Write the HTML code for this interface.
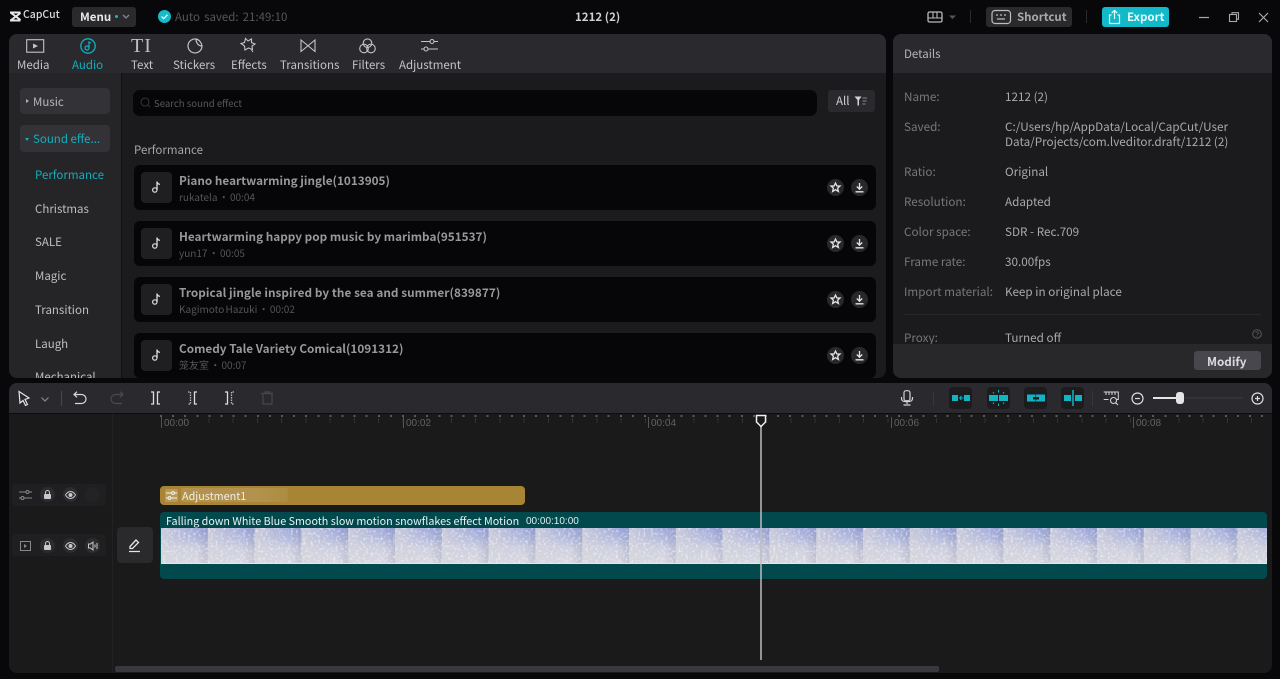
<!DOCTYPE html>
<html><head><meta charset="utf-8"><title>CapCut</title>
<style>
html,body{margin:0;padding:0;background:#08080a;width:1280px;height:679px;overflow:hidden}
body{position:relative;font-family:"Noto Sans CJK SC","Liberation Sans",sans-serif;color:#c8c8cc;font-size:12px}
.a{position:absolute;white-space:nowrap;line-height:1}
.b{position:absolute}
svg{position:absolute;overflow:visible;fill:none}
.tab{position:absolute;top:58px;font-size:11.5px;line-height:14px;color:#c4c4c8;white-space:nowrap}
.side{position:absolute;left:35px;font-size:11.5px;line-height:14px;color:#bfbfc3;white-space:nowrap}
.row{position:absolute;left:134px;width:742px;height:45px;background:#060608;border-radius:6px}
.thumb{position:absolute;left:7px;top:7px;width:31px;height:31px;background:#1f1f21;border-radius:4px}
.tt{position:absolute;left:45px;top:8px;font-size:11.75px;line-height:15px;font-weight:700;color:#98989c;white-space:nowrap}
.st{position:absolute;left:45px;top:25px;font-size:10px;line-height:14px;color:#55555a;white-space:nowrap;word-spacing:-1px}
.rb{position:absolute;top:14px;width:17px;height:17px;border-radius:50%;background:#28282b}
.lb{position:absolute;left:904px;font-size:11.7px;line-height:14px;color:#77777b;white-space:nowrap}
.val{position:absolute;left:1005px;font-size:11.7px;line-height:15px;color:#a9a9ad;white-space:nowrap}
.ci{position:absolute;width:15px;height:15px;border-radius:50%;background:#2c2c2f}
.sq{position:absolute;top:387px;width:23px;height:22px;border-radius:4px;background:#1c1c1f}
.tick{position:absolute;top:417px;width:1px;height:11px;background:#555}
.tl{position:absolute;top:418px;font:10px/11px "Liberation Sans",sans-serif;color:#626266}
</style></head><body>

<!-- top bar -->
<svg style="left:9px;top:11px" width="13" height="11" viewBox="0 0 13 11"><path d="M1 1.500h10.500M1 9.500h10.500M1.500 1.500 11.500 9M1.500 9.500 11.500 2" stroke="#e8e8e8" stroke-width="2"/></svg>
<div class="a" style="left:23px;top:10px;font-size:10.5px;color:#d8d8d8;font-weight:500">CapCut</div>
<div class="b" style="left:72px;top:7px;width:64px;height:20px;background:#2a2a2d;border-radius:3px"></div>
<div class="a" style="left:80px;top:12px;font-size:11.5px;font-weight:700;color:#e8e8ea">Menu</div>
<div class="b" style="left:115px;top:15px;width:3px;height:3px;border-radius:50%;background:#14b8c8"></div>
<svg style="left:122px;top:14px" width="9" height="6"><path d="M1 1l3 3 3-3" stroke="#88888c" stroke-width="1.3"/></svg>
<div class="b" style="left:158px;top:10px;width:13px;height:13px;border-radius:50%;background:#14bccb"></div>
<svg style="left:158px;top:10px" width="13" height="13"><path d="M3.500 6.500l2.200 2.200 3.800-4" stroke="#fff" stroke-width="1.2"/></svg>
<div class="a" style="left:175px;top:12px;font-size:11.5px;color:#55555a;word-spacing:1.500px">Auto saved: 21:49:10</div>
<div class="a" style="left:575px;top:12px;font-size:11.5px;font-weight:700;color:#d0d0d4">1212 (2)</div>

<svg style="left:927px;top:11px" width="30" height="12"><rect x="1" y="1" width="14" height="10" rx="1.500" stroke="#bbb" stroke-width="1.3"/><path d="M1 7h14M6 1v6M10 1v6" stroke="#bbb" stroke-width="1.1"/><path d="M22 4.500h7l-3.500 3.500z" fill="#55555a"/></svg>
<div class="b" style="left:970px;top:10px;width:1px;height:13px;background:#2a2a2d"></div>
<div class="b" style="left:986px;top:7px;width:86px;height:20px;background:#2a2a2d;border-radius:3px"></div>
<svg style="left:991px;top:9px" width="21" height="16"><rect x="1" y="1.500" width="18.500" height="13" rx="3" stroke="#bdbdc0" stroke-width="1.2"/><path d="M5 6h2M9 6h2M13 6h2M6 10h8" stroke="#bdbdc0" stroke-width="1.2"/></svg>
<div class="a" style="left:1017px;top:12px;font-size:11.5px;font-weight:700;color:#a8a8ac">Shortcut</div>
<div class="b" style="left:1086px;top:10px;width:1px;height:13px;background:#2a2a2d"></div>
<div class="b" style="left:1102px;top:7px;width:67px;height:20px;background:#12b9c8;border-radius:3px"></div>
<svg style="left:1108px;top:9px" width="14" height="16"><path d="M3.500 6H1.500v8.500h10V6H9.500M6.500 10V1.500M3.800 4 6.500 1.500 9.200 4" stroke="#e8fbfd" stroke-width="1.2"/></svg>
<div class="a" style="left:1127px;top:12px;font-size:11.5px;font-weight:700;color:#eafcfe">Export</div>
<svg style="left:1199px;top:12px" width="72" height="12"><path d="M0 5.500h10" stroke="#a8a8ac" stroke-width="1.2"/><rect x="30.500" y="2.500" width="7" height="7" stroke="#a8a8ac" stroke-width="1.1"/><path d="M33 2.500V.7h6.500v6.500H37.500" stroke="#a8a8ac" stroke-width="1.1"/><path d="M60 1l9 9M69 1l-9 9" stroke="#a8a8ac" stroke-width="1.2"/></svg>

<!-- left panel -->
<div class="b" style="left:9px;top:34px;width:877px;height:344px;background:#1b1b1d;border-radius:8px;overflow:hidden">
  <div class="b" style="left:0;top:0;width:877px;height:39px;background:#2a2a2e"></div>
  <div class="b" style="left:0;top:39px;width:112px;height:305px;background:#252528;border-right:1px solid #111"></div>
</div>
<!-- tab icons -->
<svg style="left:26px;top:39px" width="18" height="14"><rect x=".7" y=".7" width="17" height="12.500" stroke="#c4c4c8" stroke-width="1.1"/><path d="M7 4.500l5 2.500-5 2.500z" fill="#c4c4c8"/></svg>
<svg style="left:80px;top:38px" width="16" height="16"><circle cx="8" cy="8" r="7.200" stroke="#12b0c0" stroke-width="1.3"/><circle cx="7" cy="10" r="2" stroke="#12b0c0" stroke-width="1.2"/><path d="M9 10V4l2 1" stroke="#12b0c0" stroke-width="1.2"/></svg>
<div class="a" style="left:131px;top:38px;font:20px/16px 'Liberation Serif',serif;color:#c0c0c4;letter-spacing:1px">TI</div>
<svg style="left:187px;top:38px" width="16" height="16"><path d="M9 1A7 7 0 1 0 15 8C11.500 8 9 5 9 1zM9 1c3 .5 5.500 3.500 6 7" stroke="#c4c4c8" stroke-width="1.2"/></svg>
<svg style="left:240px;top:37px" width="16" height="16"><path d="M5.500 1.500 8 4l3.500-2v3.500L15 7l-3 2 .5 3.500-4-1.500L5 13l-.5-4L1 6.500l3.500-1z" stroke="#c4c4c8" stroke-width="1.1"/><path d="M11.500 13l1.500 2" stroke="#c4c4c8"/></svg>
<svg style="left:300px;top:39px" width="16" height="14"><path d="M1 1l14 11.500V1L1 12.500z" stroke="#c4c4c8" stroke-width="1.1"/></svg>
<svg style="left:359px;top:38px" width="17" height="16"><circle cx="8.500" cy="5.200" r="4.300" stroke="#c4c4c8" stroke-width="1.100"/><circle cx="5" cy="10.500" r="4.300" stroke="#c4c4c8" stroke-width="1.100"/><circle cx="12" cy="10.500" r="4.300" stroke="#c4c4c8" stroke-width="1.100"/></svg>
<svg style="left:421px;top:38px" width="17" height="15"><path d="M0 3.500h9M13 3.500h4M0 11h3M7 11h10" stroke="#c4c4c8" stroke-width="1.100"/><circle cx="11" cy="3.500" r="2" stroke="#c4c4c8" stroke-width="1.100"/><circle cx="5" cy="11" r="2" stroke="#c4c4c8" stroke-width="1.100"/></svg>
<div class="tab" style="left:17px">Media</div>
<div class="tab" style="left:72px;color:#12aebd">Audio</div>
<div class="tab" style="left:131px">Text</div>
<div class="tab" style="left:173px">Stickers</div>
<div class="tab" style="left:231px">Effects</div>
<div class="tab" style="left:280px">Transitions</div>
<div class="tab" style="left:352px">Filters</div>
<div class="tab" style="left:399px">Adjustment</div>

<!-- sidebar -->
<div class="b" style="left:20px;top:88px;width:90px;height:26px;background:#333337;border-radius:4px"></div>
<div class="b" style="left:26px;top:99px;border-left:3px solid #b0b0b4;border-top:2.500px solid transparent;border-bottom:2.500px solid transparent"></div>
<div class="side" style="left:33px;top:95px;color:#b8b8bc">Music</div>
<div class="b" style="left:20px;top:125px;width:90px;height:27px;background:#333337;border-radius:4px"></div>
<div class="b" style="left:25px;top:138px;border-top:3px solid #12aebd;border-left:2.500px solid transparent;border-right:2.500px solid transparent"></div>
<div class="side" style="left:33px;top:132px;color:#12aebd">Sound effe...</div>
<div class="side" style="top:168px;color:#12aebd">Performance</div>
<div class="side" style="top:202px">Christmas</div>
<div class="side" style="top:235px">SALE</div>
<div class="side" style="top:269px">Magic</div>
<div class="side" style="top:303px">Transition</div>
<div class="side" style="top:337px">Laugh</div>
<div class="b" style="left:20px;top:370px;width:100px;height:8px;overflow:hidden"><div class="side" style="left:15px;top:0">Mechanical</div></div>

<!-- search -->
<div class="b" style="left:133px;top:90px;width:684px;height:26px;background:#060608;border-radius:7px"></div>
<svg style="left:140px;top:97px" width="11" height="11"><circle cx="5" cy="5" r="4" stroke="#333" stroke-width="1.100"/><path d="M8 8l2 2" stroke="#333"/></svg>
<div class="a" style="left:154px;top:99px;font-size:9.600px;color:#58585c">Search sound effect</div>
<div class="b" style="left:828px;top:90px;width:47px;height:22px;background:#2a2a2e;border-radius:3px"></div>
<div class="a" style="left:836px;top:96px;font-size:11.500px;color:#d0d0d4">All</div>
<svg style="left:854px;top:96px" width="14" height="10"><path d="M.5.500h7L5 4v5.500H3.500V4z" fill="#d4d4d8"/><path d="M8.500 2H13M8.500 5H12.500M8.500 8H11.500" stroke="#88888c"/></svg>
<div class="a" style="left:134px;top:145px;font-size:11.500px;color:#a6a6aa">Performance</div>

<!-- rows -->
<div class="row" style="top:165px"><div class="thumb"></div><svg style="left:17px;top:15px" width="11" height="14"><path d="M6 1.500v8.500" stroke="#ddd" stroke-width="1.300"/><circle cx="3.800" cy="10" r="2.200" stroke="#ddd" stroke-width="1.200"/><path d="M6 2c.5 1.500 1.500 2.200 3 2.300" stroke="#ddd" stroke-width="1.200"/></svg><div class="tt">Piano heartwarming jingle(1013905)</div><div class="st">rukatela · 00:04</div><div class="rb" style="left:693px"></div><div class="rb" style="left:717px"></div><svg style="left:696px;top:17px" width="11" height="11"><path d="M5.500 1 6.900 4h3.100L7.600 6.200l.8 3.300-2.900-1.800-2.900 1.800.8-3.300L1 4h3.100z" stroke="#e4e4e4" stroke-width="1.300"/></svg><svg style="left:720px;top:17px" width="11" height="11"><path d="M5.500 1v6M2.800 4.500 5.500 7.200 8.200 4.500M1.500 9.800h8" stroke="#e4e4e4" stroke-width="1.300"/></svg></div>
<div class="row" style="top:221px"><div class="thumb"></div><svg style="left:17px;top:15px" width="11" height="14"><path d="M6 1.500v8.500" stroke="#ddd" stroke-width="1.300"/><circle cx="3.800" cy="10" r="2.200" stroke="#ddd" stroke-width="1.200"/><path d="M6 2c.5 1.500 1.500 2.200 3 2.300" stroke="#ddd" stroke-width="1.200"/></svg><div class="tt">Heartwarming happy pop music by marimba(951537)</div><div class="st">yun17 · 00:05</div><div class="rb" style="left:693px"></div><div class="rb" style="left:717px"></div><svg style="left:696px;top:17px" width="11" height="11"><path d="M5.500 1 6.900 4h3.100L7.600 6.200l.8 3.300-2.900-1.800-2.900 1.800.8-3.300L1 4h3.100z" stroke="#e4e4e4" stroke-width="1.300"/></svg><svg style="left:720px;top:17px" width="11" height="11"><path d="M5.500 1v6M2.800 4.500 5.500 7.200 8.200 4.500M1.500 9.800h8" stroke="#e4e4e4" stroke-width="1.300"/></svg></div>
<div class="row" style="top:277px"><div class="thumb"></div><svg style="left:17px;top:15px" width="11" height="14"><path d="M6 1.500v8.500" stroke="#ddd" stroke-width="1.300"/><circle cx="3.800" cy="10" r="2.200" stroke="#ddd" stroke-width="1.200"/><path d="M6 2c.5 1.500 1.500 2.200 3 2.300" stroke="#ddd" stroke-width="1.200"/></svg><div class="tt" style="letter-spacing:.05px">Tropical jingle inspired by the sea and summer(839877)</div><div class="st">Kagimoto Hazuki · 00:02</div><div class="rb" style="left:693px"></div><div class="rb" style="left:717px"></div><svg style="left:696px;top:17px" width="11" height="11"><path d="M5.500 1 6.900 4h3.100L7.600 6.200l.8 3.300-2.900-1.800-2.900 1.800.8-3.300L1 4h3.100z" stroke="#e4e4e4" stroke-width="1.300"/></svg><svg style="left:720px;top:17px" width="11" height="11"><path d="M5.500 1v6M2.800 4.500 5.500 7.200 8.200 4.500M1.500 9.800h8" stroke="#e4e4e4" stroke-width="1.300"/></svg></div>
<div class="row" style="top:333px"><div class="thumb"></div><svg style="left:17px;top:15px" width="11" height="14"><path d="M6 1.500v8.500" stroke="#ddd" stroke-width="1.300"/><circle cx="3.800" cy="10" r="2.200" stroke="#ddd" stroke-width="1.200"/><path d="M6 2c.5 1.500 1.500 2.200 3 2.300" stroke="#ddd" stroke-width="1.200"/></svg><div class="tt">Comedy Tale Variety Comical(1091312)</div><div class="st">笼友室 · 00:07</div><div class="rb" style="left:693px"></div><div class="rb" style="left:717px"></div><svg style="left:696px;top:17px" width="11" height="11"><path d="M5.500 1 6.900 4h3.100L7.600 6.200l.8 3.300-2.900-1.800-2.900 1.800.8-3.300L1 4h3.100z" stroke="#e4e4e4" stroke-width="1.300"/></svg><svg style="left:720px;top:17px" width="11" height="11"><path d="M5.500 1v6M2.800 4.500 5.500 7.200 8.200 4.500M1.500 9.800h8" stroke="#e4e4e4" stroke-width="1.300"/></svg></div>

<!-- details panel -->
<div class="b" style="left:893px;top:34px;width:379px;height:344px;background:#1b1b1d;border-radius:8px;overflow:hidden">
  <div class="b" style="left:0;top:0;width:379px;height:39px;background:#2a2a2e"></div>
</div>
<div class="a" style="left:904px;top:49px;font-size:11.500px;color:#b4b4b8">Details</div>
<div class="lb" style="top:90px">Name:</div><div class="val" style="top:89px">1212 (2)</div>
<div class="lb" style="top:120px">Saved:</div><div class="val" style="top:119px">C:/Users/hp/AppData/Local/CapCut/User</div><div class="val" style="top:134px">Data/Projects/com.lveditor.draft/1212 (2)</div>
<div class="lb" style="top:165px">Ratio:</div><div class="val" style="top:164px">Original</div>
<div class="lb" style="top:195px">Resolution:</div><div class="val" style="top:194px">Adapted</div>
<div class="lb" style="top:225px">Color space:</div><div class="val" style="top:224px">SDR - Rec.709</div>
<div class="lb" style="top:255px">Frame rate:</div><div class="val" style="top:254px">30.00fps</div>
<div class="lb" style="top:285px">Import material:</div><div class="val" style="top:284px">Keep in original place</div>
<div class="b" style="left:904px;top:314px;width:357px;height:1px;background:#28282a"></div>
<div class="lb" style="top:331px">Proxy:</div><div class="val" style="top:330px">Turned off</div>
<svg style="left:1252px;top:329px" width="10" height="10"><circle cx="5" cy="5" r="4.300" stroke="#58585c"/><path d="M3.700 4c0-1.700 2.700-1.700 2.700 0 0 1-1.400 1-1.400 2.200M5 7.300v.8" stroke="#58585c" stroke-width=".8"/></svg>
<div class="b" style="left:893px;top:344px;width:379px;height:34px;background:#28282b;border-radius:0 0 8px 8px"></div>
<div class="b" style="left:1194px;top:351px;width:67px;height:19px;background:#47474d;border-radius:3px"></div>
<div class="a" style="left:1207px;top:356px;font-size:11.700px;font-weight:700;color:#dcdce0">Modify</div>

<!-- timeline panel -->
<div class="b" style="left:9px;top:383px;width:1263px;height:290px;background:#1a1a1b;border-radius:8px;overflow:hidden">
  <div class="b" style="left:0;top:0;width:1263px;height:30px;background:#2a2a2e;border-bottom:1px solid #0e0e10"></div>
  <div class="b" style="left:103px;top:31px;width:1px;height:259px;background:#222224"></div>
</div>
<!-- toolbar left icons -->
<svg style="left:17px;top:390px" width="15" height="17"><path d="M2 1.500l10 6.500-4 1.500 2.500 5-2 1-2.500-5-3 2.500z" stroke="#e4e4e4" stroke-width="1.200"/></svg>
<svg style="left:41px;top:397px" width="8" height="5"><path d="M.5.500 4 4 7.500.500" stroke="#88888c" stroke-width="1.200"/></svg>
<div class="b" style="left:61px;top:391px;width:1px;height:15px;background:#48484c"></div>
<svg style="left:73px;top:391px" width="14" height="14"><path d="M1 3.500h7.500a4 4 0 0 1 0 9H2M4 .7 1 3.500 4 6.300" stroke="#d8d8dc" stroke-width="1.200"/></svg>
<svg style="left:110px;top:391px" width="14" height="14"><path d="M13 3.500H5.500a4 4 0 0 0 0 9H12M10 .7l3 2.800-3 2.800" stroke="#4a4a4e" stroke-width="1.200"/></svg>
<svg style="left:150px;top:391px" width="11" height="14"><path d="M1 1h2.500v12H1M10 1H7.500v12H10" stroke="#ddd" stroke-width="1.300"/></svg>
<svg style="left:187px;top:391px" width="11" height="14"><path d="M1 1h2.500v12H1" stroke="#bbb" stroke-width="1.300" stroke-dasharray="1.500 1"/><path d="M10 1H7.500v12H10" stroke="#ddd" stroke-width="1.300"/></svg>
<svg style="left:224px;top:391px" width="11" height="14"><path d="M1 1h2.500v12H1" stroke="#ddd" stroke-width="1.300"/><path d="M10 1H7.500v12H10" stroke="#bbb" stroke-width="1.300" stroke-dasharray="1.500 1"/></svg>
<svg style="left:261px;top:391px" width="13" height="14"><path d="M0 2.500h12M4 2.500V1h5v1.500M2 2.500v10.500h9V2.500" stroke="#47474b" stroke-width="1.200"/></svg>

<!-- toolbar right icons -->
<svg style="left:900px;top:390px" width="14" height="17"><rect x="4" y=".7" width="6" height="10" rx="2" stroke="#d4d4d8" stroke-width="1.200"/><path d="M1.500 7v1.500a3 3 0 0 0 3 3h5a3 3 0 0 0 3-3V7M7 11.500V14M3.500 15h7" stroke="#d4d4d8" stroke-width="1.200"/></svg>
<div class="b" style="left:933px;top:391px;width:1px;height:15px;background:#37373b"></div>
<div class="sq" style="left:949px"></div><div class="sq" style="left:987px"></div><div class="sq" style="left:1024px"></div><div class="sq" style="left:1061px"></div>
<svg style="left:951px;top:393px" width="20" height="10"><path d="M1 2h6v6H1zM13 2h6v6h-6z" fill="#10b4c4"/><path d="M8.500 5h4M8.500 5l2-2M8.500 5l2 2" stroke="#10b4c4"/></svg>
<svg style="left:988px;top:389px" width="21" height="18"><path d="M1 6h19v6H1z" fill="#10b4c4"/><path d="M10.500 6v6" stroke="#1c1c1f"/><path d="M5 3l1 1.500M10.500 1v2.500M16 3l-1 1.500M5 15l1-1.500M10.500 17v-2.500M16 15l-1-1.500" stroke="#10b4c4"/></svg>
<svg style="left:1026px;top:393px" width="20" height="10"><path d="M1 1.500h18v7H1z" fill="#10b4c4"/><path d="M7 4h6v2.500H7z" fill="#1c1c1f"/><path d="M9.800 1.500v7" stroke="#1c1c1f" stroke-width=".6"/></svg>
<svg style="left:1063px;top:389px" width="20" height="18"><path d="M1 6h7v6H1zM12 6h7v6h-7z" fill="#10b4c4"/><path d="M10 1v16" stroke="#10b4c4" stroke-width="1.500"/></svg>
<div class="b" style="left:1092px;top:391px;width:1px;height:15px;background:#37373b"></div>
<svg style="left:1103px;top:391px" width="16" height="15"><path d="M.7 1h14.600v7.500H9M5.500 8.500H.7z" stroke="#d4d4d8"/><path d="M3 1v3M6 1v3M9 1v3M12 1v3" stroke="#d4d4d8"/><circle cx="10.500" cy="9.500" r="3" stroke="#d4d4d8" stroke-width="1.100" fill="#2a2a2e"/><path d="M12.700 11.700 15 14" stroke="#d4d4d8" stroke-width="1.100"/></svg>
<svg style="left:1131px;top:392px" width="13" height="13"><circle cx="6.500" cy="6.500" r="5.500" stroke="#dcdce0" stroke-width="1.200"/><path d="M4 6.500h5" stroke="#dcdce0" stroke-width="1.200"/></svg>
<div class="b" style="left:1180px;top:397px;width:63px;height:2px;background:#333337"></div>
<div class="b" style="left:1153px;top:397px;width:27px;height:2px;background:#e4e4e4"></div>
<div class="b" style="left:1176px;top:392px;width:8px;height:12px;background:#e4e4e4;border-radius:3px"></div>
<svg style="left:1251px;top:392px" width="14" height="13"><circle cx="6.500" cy="6.500" r="5.500" stroke="#dcdce0" stroke-width="1.200"/><path d="M4 6.500h5M6.500 4v5" stroke="#dcdce0" stroke-width="1.200"/></svg>

<!-- ruler -->
<div class="b" style="left:160px;top:415px;width:1109px;height:2px;background:repeating-linear-gradient(90deg,#5a5a5e 0 2px,transparent 2px 12.100px)"></div>
<div class="b" style="left:184px;top:418px;width:1085px;height:5px;background:repeating-linear-gradient(90deg,#333337 0 1px,transparent 1px 24.250px)"></div>
<div class="tick" style="left:161px"></div><div class="tl" style="left:164px">00:00</div>
<div class="tick" style="left:403px"></div><div class="tl" style="left:406px">00:02</div>
<div class="tick" style="left:648px"></div><div class="tl" style="left:651px">00:04</div>
<div class="tick" style="left:891px"></div><div class="tl" style="left:894px">00:06</div>
<div class="tick" style="left:1133px"></div><div class="tl" style="left:1136px">00:08</div>

<!-- track heads -->
<div class="b" style="left:12px;top:484px;width:94px;height:22px;background:#1f1f21;border-radius:4px"></div>
<div class="b" style="left:12px;top:534px;width:94px;height:22px;background:#1f1f21;border-radius:4px"></div>
<svg style="left:19px;top:489px" width="13" height="12"><path d="M0 3h7M10 3h3M0 9h2M5 9h8" stroke="#88888c"/><circle cx="8.500" cy="3" r="1.500" stroke="#88888c"/><circle cx="3.500" cy="9" r="1.500" stroke="#88888c"/></svg>
<div class="ci" style="left:40px;top:487px"></div><div class="ci" style="left:63px;top:487px"></div><div class="ci" style="left:85px;top:487px;background:#232325"></div>
<svg style="left:43px;top:490px" width="9" height="10"><path d="M2.500 4V2.500a2 2 0 0 1 4 0V4" stroke="#c8c8cc"/><rect x="1" y="4" width="7" height="5" rx="1" fill="#c8c8cc"/></svg>
<svg style="left:65px;top:491px" width="11" height="8"><path d="M.5 4C2 1.500 3.500.5 5.500.5S9 1.500 10.500 4C9 6.500 7.500 7.500 5.500 7.500S2 6.500.5 4z" stroke="#c8c8cc"/><circle cx="5.500" cy="4" r="2" fill="#c8c8cc"/></svg>
<svg style="left:20px;top:541px" width="11" height="10"><rect x=".5" y=".5" width="10" height="9" stroke="#88888c"/><path d="M4 3l3 2-3 2z" fill="#88888c"/></svg>
<div class="ci" style="left:40px;top:538px"></div><div class="ci" style="left:63px;top:538px"></div><div class="ci" style="left:85px;top:538px"></div>
<svg style="left:43px;top:541px" width="9" height="10"><path d="M2.500 4V2.500a2 2 0 0 1 4 0V4" stroke="#c8c8cc"/><rect x="1" y="4" width="7" height="5" rx="1" fill="#c8c8cc"/></svg>
<svg style="left:65px;top:542px" width="11" height="8"><path d="M.5 4C2 1.500 3.500.5 5.500.5S9 1.500 10.500 4C9 6.500 7.500 7.500 5.500 7.500S2 6.500.5 4z" stroke="#c8c8cc"/><circle cx="5.500" cy="4" r="2" fill="#c8c8cc"/></svg>
<svg style="left:88px;top:541px" width="11" height="10"><path d="M.5 3h2L5 1v8L2.500 7h-2z" stroke="#c8c8cc"/><path d="M7 3.500v3M9 2v6" stroke="#c8c8cc"/></svg>
<div class="b" style="left:117px;top:527px;width:36px;height:36px;background:#2a2a2c;border-radius:4px"></div>
<svg style="left:128px;top:537px" width="14" height="16"><path d="M2 9.500 8 3l2.500 2.500L4.500 11.500H2zM1 14.500h11" stroke="#e4e4e8" stroke-width="1.300"/></svg>

<!-- adjustment clip -->
<div class="b" style="left:160px;top:486px;width:365px;height:19px;background:#a88435;border-radius:4px"></div>
<div class="b" style="left:181px;top:488px;width:107px;height:14px;background:linear-gradient(90deg,#b2924e,#b2924e 70%,#ad8b41);border-radius:2px"></div>
<div class="b" style="left:165px;top:489px;width:13px;height:13px;background:#b99a58;border-radius:2px"></div>
<svg style="left:166px;top:490px" width="11" height="11"><path d="M0 3h5.500M8.500 3H11M0 8h2M5 8h6" stroke="#f2f2f2"/><circle cx="7" cy="3" r="1.400" stroke="#f2f2f2"/><circle cx="3.500" cy="8" r="1.400" stroke="#f2f2f2"/></svg>
<div class="a" style="left:182px;top:491px;font-size:10.800px;color:#f0eee6">Adjustment1</div>

<!-- video clip -->
<div class="b" style="left:160px;top:512px;width:1107px;height:67px;background:#02494d;border-radius:4px"></div>
<div class="b" style="left:161px;top:528px;width:1106px;height:36px;background-color:#c5c8dc;background-image:
 linear-gradient(90deg,rgba(212,212,220,.8) 0%,rgba(208,208,218,.45) 40%,rgba(205,205,215,.1) 75%,rgba(110,115,150,.22) 100%),
 linear-gradient(180deg,#9aa5da 0%,#aeb6de 28%,#cdcfe0 55%,#dcdce4 100%);background-size:46.800px 36px;background-repeat:repeat-x"></div>
<svg style="left:161px;top:528px" width="1106" height="36"><filter id="snow" x="0" y="0" width="100%" height="100%"><feTurbulence type="fractalNoise" baseFrequency=".4" numOctaves="2" seed="4"/><feColorMatrix values="0 0 0 0 1  0 0 0 0 1  0 0 0 0 1  0 0 0 3.500 -1.750"/></filter><rect width="1106" height="36" filter="url(#snow)" opacity=".5"/></svg>
<div class="b" style="left:161px;top:563px;width:1106px;height:1px;background:#e6e6ec"></div>
<div class="a" style="left:166px;top:517px;font-size:10.750px;color:#eaf4f4">Falling down White Blue Smooth slow motion snowflakes effect Motion</div>
<div class="a" style="left:526px;top:517px;font-size:10px;color:#dfeeee;font-family:'Liberation Sans',sans-serif">00:00:10:00</div>

<!-- playhead -->
<div class="b" style="left:760px;top:425px;width:2px;height:235px;background:rgba(190,190,190,.75)"></div>
<svg style="left:755px;top:414px" width="12" height="14"><path d="M1.500 1.500h9v6.500L6 12.500 1.500 8z" fill="#1a1a1b" stroke="#f0f0f0" stroke-width="1.500"/></svg>

<!-- scrollbar -->
<div class="b" style="left:115px;top:666px;width:824px;height:6px;background:#38383d;border-radius:2px"></div>
</body></html>
